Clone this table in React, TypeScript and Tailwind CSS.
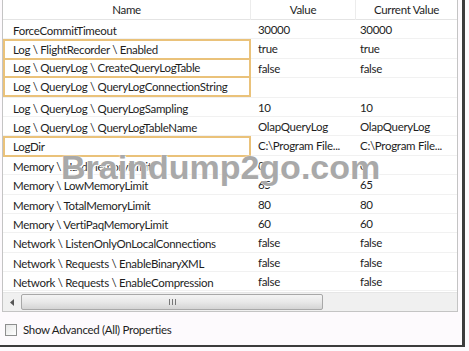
import React from "react";

type Row = { name: string; value: string; current: string; box?: "top" | "mid" | "bottom" | "single" };

const rows: Row[] = [
  { name: "ForceCommitTimeout", value: "30000", current: "30000" },
  { name: "Log \\ FlightRecorder \\ Enabled", value: "true", current: "true", box: "top" },
  { name: "Log \\ QueryLog \\ CreateQueryLogTable", value: "false", current: "false", box: "mid" },
  { name: "Log \\ QueryLog \\ QueryLogConnectionString", value: "", current: "", box: "bottom" },
  { name: "Log \\ QueryLog \\ QueryLogSampling", value: "10", current: "10" },
  { name: "Log \\ QueryLog \\ QueryLogTableName", value: "OlapQueryLog", current: "OlapQueryLog" },
  { name: "LogDir", value: "C:\\Program File...", current: "C:\\Program File...", box: "single" },
  { name: "Memory \\ HardMemoryLimit", value: "0", current: "0" },
  { name: "Memory \\ LowMemoryLimit", value: "65", current: "65" },
  { name: "Memory \\ TotalMemoryLimit", value: "80", current: "80" },
  { name: "Memory \\ VertiPaqMemoryLimit", value: "60", current: "60" },
  { name: "Network \\ ListenOnlyOnLocalConnections", value: "false", current: "false" },
  { name: "Network \\ Requests \\ EnableBinaryXML", value: "false", current: "false" },
  { name: "Network \\ Requests \\ EnableCompression", value: "false", current: "false" },
];

function boxClass(box?: Row["box"]) {
  if (!box) return "border-2 border-transparent";
  if (box === "top" || box === "single") return "border-2 border-[#eac27a]";
  return "border-2 border-t-0 border-[#eac27a]";
}

export default function App() {
  return (
    <div
      className="relative w-[469px] h-[351px] bg-[#fdfafd] overflow-hidden text-[#1e1e1e] tracking-[-0.3px]"
      style={{ fontFamily: 'Lato, "Liberation Sans", sans-serif' }}
    >
      <div className="flex flex-col w-[465px] h-[347px] border-r-[3px] border-b-[2px] border-[#3c3c3c] bg-[#fdfafd]">
        {/* list */}
        <div className="ml-[2px] w-[456px] h-[312px] border border-[#c4c4c4] border-t-0 bg-white flex flex-col">
          <div className="grid grid-cols-[248px_105px_1fr] h-[20px] border-b border-[#e4e4e4] text-[11.5px] leading-[20px]">
            <div className="text-center border-r border-[#ececec]">Name</div>
            <div className="text-center border-r border-[#ececec]">Value</div>
            <div className="text-center">Current Value</div>
          </div>
          {rows.map((r) => (
            <div
              key={r.name}
              className="grid grid-cols-[248px_105px_1fr] h-[19.4px] border-b border-[#f1f1f1] text-[11.5px] leading-[17px]"
            >
              <div className={`pl-[8px] whitespace-nowrap ${boxClass(r.box)}`}>{r.name}</div>
              <div className="pl-[7px] pt-[1px] whitespace-nowrap">{r.value}</div>
              <div className="pl-[4px] pt-[1px] whitespace-nowrap">{r.current}</div>
            </div>
          ))}
          {/* horizontal scrollbar */}
          <div className="mt-auto flex items-center h-[19px] bg-[#f0f0f0] border-t border-[#e6e6e6]">
            <div className="w-[18px] h-full flex items-center justify-center">
              <svg width="5" height="7" viewBox="0 0 5 7">
                <path d="M4 0 L0 3.5 L4 7 Z" fill="#555" />
              </svg>
            </div>
            <div className="w-[302px] h-[16px] rounded-[2px] border border-[#a8a8a8] bg-gradient-to-b from-[#f4f4f4] via-[#e8e8e8] to-[#d4d4d4] flex items-center justify-center">
              <div className="flex gap-[2px]">
                <div className="w-px h-[6px] bg-[#777]" />
                <div className="w-px h-[6px] bg-[#777]" />
                <div className="w-px h-[6px] bg-[#777]" />
              </div>
            </div>
          </div>
        </div>
        {/* bottom checkbox */}
        <div className="flex items-center gap-[6px] pl-[5px] mt-[9px] text-[11.5px]">
          <div className="w-[12px] h-[12px] border border-[#8e8f8f] bg-gradient-to-br from-[#e6e6e6] to-white" />
          <span>Show Advanced (All) Properties</span>
        </div>
      </div>
      {/* watermark */}
      <div
        className="absolute left-[61px] top-[150px] text-[34px] font-bold tracking-normal text-[#a9a9a9] leading-none pointer-events-none"
        style={{ fontFamily: '"Liberation Sans", Arial, sans-serif', textShadow: "0 0 2px #fff, 1px 1px 0 #fff" }}
      >
        Braindump2go.com
      </div>
    </div>
  );
}
